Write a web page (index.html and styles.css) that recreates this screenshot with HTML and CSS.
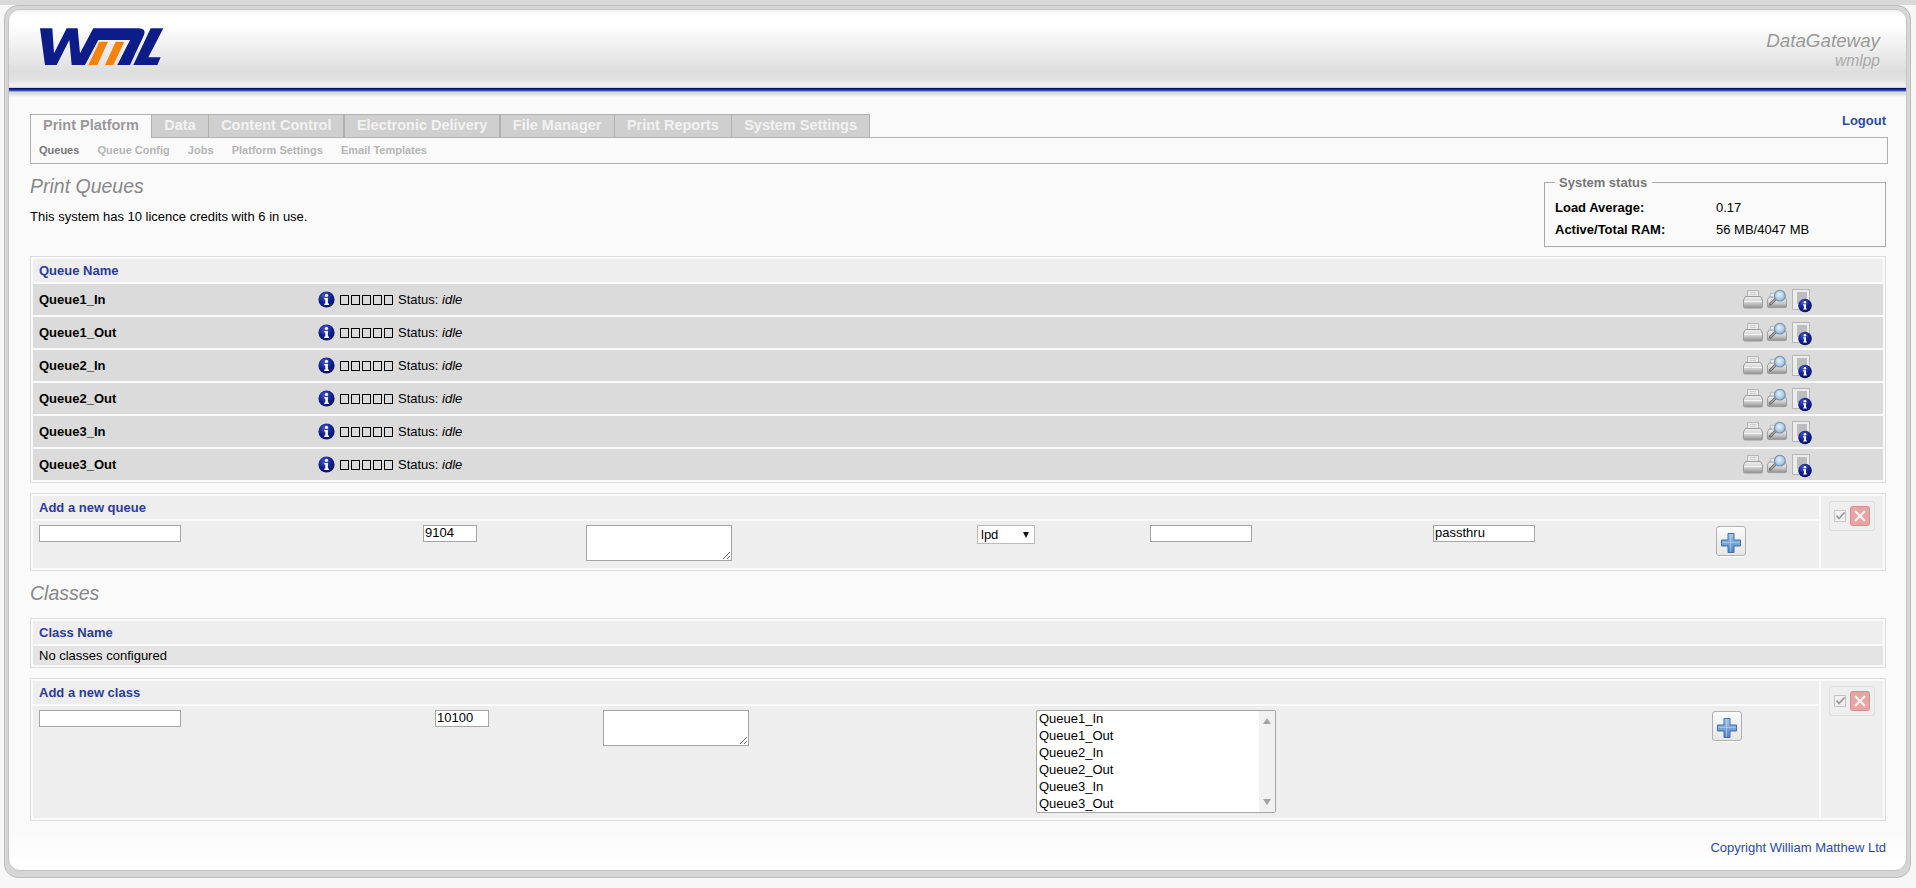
FILE: index.html
```html
<!DOCTYPE html>
<html lang="en">
<head>
<meta charset="utf-8">
<title>DataGateway - Print Queues</title>
<link rel="stylesheet" href="styles.css">
</head>
<body>
<svg class="defs" width="0" height="0" aria-hidden="true">
  <defs>
    <radialGradient id="gInfo" cx="40%" cy="30%" r="75%">
      <stop offset="0" stop-color="#4a5ad0"/><stop offset=".55" stop-color="#10208f"/><stop offset="1" stop-color="#060f60"/>
    </radialGradient>
    <linearGradient id="gPrint" x1="0" y1="0" x2="0" y2="1">
      <stop offset="0" stop-color="#f0f0f0"/><stop offset=".55" stop-color="#cdcdcd"/><stop offset="1" stop-color="#8f8f8f"/>
    </linearGradient>
    <linearGradient id="gPlus" x1="0" y1="0" x2="0" y2="1">
      <stop offset="0" stop-color="#a5c6ea"/><stop offset="1" stop-color="#4f84c4"/>
    </linearGradient>
    <radialGradient id="gLens" cx="45%" cy="40%" r="60%">
      <stop offset="0" stop-color="#e6f1fb"/><stop offset="1" stop-color="#8fbae4"/>
    </radialGradient>
    <symbol id="i-info" viewBox="0 0 16 16">
      <circle cx="8" cy="8" r="7.6" fill="url(#gInfo)"/>
      <circle cx="8" cy="4.2" r="1.5" fill="#fff"/>
      <path d="M5.9 6.600h3.400v5.200h1v1.400H5.900v-1.400h1v-3.800h-1z" fill="#fff"/>
    </symbol>
    <symbol id="i-printer" viewBox="0 0 20 20">
      <path d="M4.500 1.500h11v6h-11z" fill="#e9e9e9" stroke="#b5b5b5"/>
      <path d="M7 3.500h6M7 5.500h6" stroke="#cfcfcf"/>
      <path d="M2.500 7.500h15l2 3.500v6.500q0 1.500-1.500 1.500H2q-1.500 0-1.500-1.500V11z" fill="url(#gPrint)" stroke="#9b9b9b"/>
      <path d="M1 12.500h18" stroke="#f6f6f6"/>
    </symbol>
    <symbol id="i-preview" viewBox="0 0 21 20">
      <path d="M3.500 4h9v5h-9z" fill="#e9e9e9" stroke="#b5b5b5"/>
      <path d="M2 8h17l1.500 3v6.500q0 1.500-1.500 1.500H2q-1.500 0-1.500-1.500V11z" fill="url(#gPrint)" stroke="#9b9b9b"/>
      <path d="M9 10 3.500 15.500" stroke="#666" stroke-width="2.800" stroke-linecap="round"/>
      <path d="M9 10 3.500 15.500" stroke="#ddd" stroke-width="1"/>
      <circle cx="13.500" cy="6.500" r="5.600" fill="url(#gLens)" stroke="#7a94ad" stroke-width="1.300"/>
    </symbol>
    <symbol id="i-doc" viewBox="0 0 20 24">
      <path d="M.5.500h17v20H.5z" fill="#ececec" stroke="#b5b5b5"/>
      <path d="M5 3h10v12H5z" fill="#bdbdbd"/>
      <circle cx="13" cy="16.500" r="6.800" fill="url(#gInfo)"/>
      <circle cx="13" cy="13.300" r="1.300" fill="#fff"/>
      <path d="M11.200 15.300h2.800v4.200h.9v1.100h-3.700v-1.100h.8v-3.100h-.8z" fill="#fff"/>
    </symbol>
    <symbol id="i-plus" viewBox="0 0 20 20">
      <path d="M7 .5h6v6.500h6.500v6H13V19.500H7V13H.5V7H7z" fill="url(#gPlus)" stroke="#3f6ea8"/>
      <path d="M1.500 9.500h17M9.500 1.500v17" stroke="#c4daf2" stroke-opacity=".55"/>
    </symbol>
    <symbol id="i-check" viewBox="0 0 12 12">
      <path d="M.5.500h11v11H.5z" fill="#f1f1f1" stroke="#c4c4c4"/>
      <path d="M2.500 5.500 5 8.500 10.500 2.500" fill="none" stroke="#9a9a9a" stroke-width="1.800"/>
    </symbol>
    <symbol id="i-cross" viewBox="0 0 20 20">
      <rect x=".5" y=".5" width="19" height="19" rx="2" fill="#e8a3a3" stroke="#d98e8e"/>
      <path d="M5 5l10 10M15 5 5 15" stroke="#fbeeee" stroke-width="2.400"/>
    </symbol>
  </defs>
</svg>

<div class="frame">
  <div class="panel">
    <header class="masthead">
      <svg class="logo" viewBox="0 0 435 165" role="img" aria-label="WML">
        <path fill="#0c1d8a" d="M30 25H67L72 100 110 25H143L150 100 190 25H325Q350 25 342 45L300 135H262L300 60H205L165 135H125L118 60 80 135H45Z"/>
        <path fill="#0c1d8a" d="M362 25H400L355 112H392L382 135H310Z"/>
        <path fill="#f5820a" d="M175 135 208 65H234L202 135Z"/>
        <path fill="#f5820a" d="M225 135 257 65H283L250 135Z"/>
      </svg>
      <div class="product">
        <div class="product-name">DataGateway</div>
        <div class="product-host">wmlpp</div>
      </div>
    </header>
    <div class="rule"></div>

    <main class="content">
      <div class="tabbar">
        <nav class="tabs">
          <a class="tab tab-active">Print Platform</a>
          <a class="tab">Data</a>
          <a class="tab">Content Control</a>
          <a class="tab">Electronic Delivery</a>
          <a class="tab">File Manager</a>
          <a class="tab">Print Reports</a>
          <a class="tab">System Settings</a>
        </nav>
        <a class="logout">Logout</a>
      </div>
      <nav class="subtabs">
        <a class="subtab subtab-active">Queues</a>
        <a class="subtab">Queue Config</a>
        <a class="subtab">Jobs</a>
        <a class="subtab">Platform Settings</a>
        <a class="subtab">Email Templates</a>
      </nav>

      <section class="intro">
        <div>
          <h1 class="title">Print Queues</h1>
          <p class="licence">This system has 10 licence credits with 6 in use.</p>
        </div>
        <fieldset class="status">
          <legend>System status</legend>
          <div class="status-row"><b>Load Average:</b><span>0.17</span></div>
          <div class="status-row"><b>Active/Total RAM:</b><span>56 MB/4047 MB</span></div>
        </fieldset>
      </section>

      <section class="box">
        <div class="cell head">Queue Name</div>
        <div class="cell queue"><b>Queue1_In</b><div class="state"><svg class="ico-info"><use href="#i-info"/></svg><span class="leds"><i></i><i></i><i></i><i></i><i></i></span><span>Status: <em>idle</em></span></div><div class="tools"><svg class="ico-p"><use href="#i-printer"/></svg><svg class="ico-v"><use href="#i-preview"/></svg><svg class="ico-d"><use href="#i-doc"/></svg></div></div>
        <div class="cell queue"><b>Queue1_Out</b><div class="state"><svg class="ico-info"><use href="#i-info"/></svg><span class="leds"><i></i><i></i><i></i><i></i><i></i></span><span>Status: <em>idle</em></span></div><div class="tools"><svg class="ico-p"><use href="#i-printer"/></svg><svg class="ico-v"><use href="#i-preview"/></svg><svg class="ico-d"><use href="#i-doc"/></svg></div></div>
        <div class="cell queue"><b>Queue2_In</b><div class="state"><svg class="ico-info"><use href="#i-info"/></svg><span class="leds"><i></i><i></i><i></i><i></i><i></i></span><span>Status: <em>idle</em></span></div><div class="tools"><svg class="ico-p"><use href="#i-printer"/></svg><svg class="ico-v"><use href="#i-preview"/></svg><svg class="ico-d"><use href="#i-doc"/></svg></div></div>
        <div class="cell queue"><b>Queue2_Out</b><div class="state"><svg class="ico-info"><use href="#i-info"/></svg><span class="leds"><i></i><i></i><i></i><i></i><i></i></span><span>Status: <em>idle</em></span></div><div class="tools"><svg class="ico-p"><use href="#i-printer"/></svg><svg class="ico-v"><use href="#i-preview"/></svg><svg class="ico-d"><use href="#i-doc"/></svg></div></div>
        <div class="cell queue"><b>Queue3_In</b><div class="state"><svg class="ico-info"><use href="#i-info"/></svg><span class="leds"><i></i><i></i><i></i><i></i><i></i></span><span>Status: <em>idle</em></span></div><div class="tools"><svg class="ico-p"><use href="#i-printer"/></svg><svg class="ico-v"><use href="#i-preview"/></svg><svg class="ico-d"><use href="#i-doc"/></svg></div></div>
        <div class="cell queue"><b>Queue3_Out</b><div class="state"><svg class="ico-info"><use href="#i-info"/></svg><span class="leds"><i></i><i></i><i></i><i></i><i></i></span><span>Status: <em>idle</em></span></div><div class="tools"><svg class="ico-p"><use href="#i-printer"/></svg><svg class="ico-v"><use href="#i-preview"/></svg><svg class="ico-d"><use href="#i-doc"/></svg></div></div>
      </section>

      <section class="box box-add">
        <div class="add-main">
          <div class="cell head">Add a new queue</div>
          <form class="cell add-row add-queue">
            <input class="field f-name" type="text">
            <input class="field f-port" type="text" value="9104">
            <textarea class="field f-desc"></textarea>
            <span class="select-wrap"><select class="field f-proto"><option>lpd</option></select></span>
            <input class="field f-wide" type="text">
            <input class="field f-wide" type="text" value="passthru">
            <button class="add-btn" type="button" aria-label="Add"><svg class="ico-plus"><use href="#i-plus"/></svg></button>
          </form>
        </div>
        <div class="cell side"><div class="side-tools"><svg class="ico-check"><use href="#i-check"/></svg><svg class="ico-cross"><use href="#i-cross"/></svg></div></div>
      </section>

      <h2 class="title title-classes">Classes</h2>

      <section class="box">
        <div class="cell head">Class Name</div>
        <div class="cell empty">No classes configured</div>
      </section>

      <section class="box box-add">
        <div class="add-main">
          <div class="cell head">Add a new class</div>
          <form class="cell add-row add-class">
            <input class="field f-name" type="text">
            <input class="field f-port" type="text" value="10100">
            <textarea class="field f-desc"></textarea>
            <div class="listbox">
              <select class="list" multiple size="6">
                <option>Queue1_In</option><option>Queue1_Out</option><option>Queue2_In</option><option>Queue2_Out</option><option>Queue3_In</option><option>Queue3_Out</option>
              </select>
              <div class="list-scroll"><i class="arrow-up"></i><i class="arrow-down"></i></div>
            </div>
            <button class="add-btn" type="button" aria-label="Add"><svg class="ico-plus"><use href="#i-plus"/></svg></button>
          </form>
        </div>
        <div class="cell side"><div class="side-tools"><svg class="ico-check"><use href="#i-check"/></svg><svg class="ico-cross"><use href="#i-cross"/></svg></div></div>
      </section>

      <footer class="copyright">Copyright William Matthew Ltd</footer>
    </main>
  </div>
</div>
</body>
</html>
```

FILE: styles.css
```css
* { box-sizing: border-box; }
html, body { margin: 0; height: 100%; }
body {
  background: linear-gradient(#d9d9d9 0, #d9d9d9 5px, #f7f7f7 5px);
  font: 13px/1.2 "Liberation Sans", Arial, sans-serif;
  color: #000;
  overflow: hidden;
}
.defs { position: absolute; }

.frame {
  margin: 5px 5px 10px 4px;
  padding: 3px 3px 6px;
  height: 873px;
  border: 1px solid #bdbdbd;
  border-radius: 14px;
  background: #d6d6d6;
}
.panel {
  height: 100%;
  border: 1px solid #c4c4c4;
  border-radius: 12px;
  background: linear-gradient(#fafafa 0, #fafafa 820px, #fff 855px);
  overflow: hidden;
}

.masthead {
  height: 78px;
  display: flex;
  justify-content: space-between;
  background: linear-gradient(#f2f2f2 0, #fff 6px, #fff 15px, #dedede 62px, #e2e2e2 70px, #f4f4f4 76px, #c9c9c9 78px);
}
.logo { width: 145px; height: 55px; margin: 10px 0 0 21px; }
.product { margin: 20px 26px 0 0; text-align: right; font-style: italic; color: #999; }
.product-name { font-size: 18.800px; line-height: 21px; }
.product-host { font-size: 15.600px; line-height: 19px; color: #aaa; }
.rule {
  height: 9px;
  background: linear-gradient(#0a1560 0, #0a1560 1px, #2a46b0 2px, #3f5fcf 3px, #e6e6e6 4px, #d6d6d6 5px, #fafafa 9px);
}

.content { padding: 0 20px 0 21px; }

.tabbar { display: flex; justify-content: space-between; padding-top: 17px; }
.tabs { display: flex; }
.tab {
  height: 24px;
  margin-right: -0.6px;
  padding: 0 12px;
  border: 1px solid #b0b0b0;
  background: #cfcfcf;
  color: #f2f2f2;
  font-size: 14.500px;
  font-weight: bold;
  line-height: 21px;
  white-space: nowrap;
}
.tab-active { position: relative; z-index: 1; border-bottom: 0; background: #fafafa; color: #999; }
.logout { margin-top: -1px; color: #2a4ab0; font-weight: bold; line-height: 16px; }

.subtabs {
  display: flex;
  gap: 18.200px;
  height: 27px;
  margin: -1px -2px 0 0;
  padding: 0 8px;
  border: 1px solid #b0b0b0;
  font-size: 11px;
  font-weight: bold;
  line-height: 25px;
  color: #b5b5b5;
}
.subtab-active { color: #777; }

.intro { display: flex; justify-content: space-between; height: 92px; }
.title { margin: 0; color: #888; font-size: 19.500px; font-style: italic; font-weight: normal; line-height: 24px; }
.intro .title { margin-top: 10px; }
.licence { margin: 11px 0 0; }

.status {
  width: 342px;
  height: 72px;
  margin: 11px 0 0;
  padding: 7px 9px 0 10px;
  border: 1px solid #aaa;
}
.status legend { padding: 0 5px 0 4px; margin-left: 0; color: #777; font-weight: bold; line-height: 15px; }
.status-row { display: flex; height: 22px; line-height: 22px; }
.status-row b { width: 161px; }

.box { margin-bottom: 10px; padding: 2px; border: 1px solid #ddd; display: flex; flex-direction: column; gap: 2px; }
.box-add { flex-direction: row; }
.add-main { flex: 1; display: flex; flex-direction: column; gap: 2px; }
.cell { background: #eee; }
.head { height: 23px; padding-left: 6px; color: #2b3a9e; font-weight: bold; line-height: 23px; }
.queue { display: flex; align-items: center; height: 31px; padding-left: 6px; background: #dbdbdb; }
.queue b { width: 279px; }
.state { display: flex; align-items: center; }
.ico-info { width: 17px; height: 17px; }
.leds { display: flex; gap: 2px; margin: 0 5px 0 5px; }
.leds i { width: 9px; height: 10px; border: 1px solid #000; }
.tools { margin-left: auto; margin-right: 71px; display: flex; align-items: flex-start; height: 31px; padding-top: 5px; }
.tools svg { display: block; }
.ico-p { width: 20px; height: 20px; margin-right: 4px; }
.ico-v { width: 20px; height: 20px; margin-right: 5px; }
.ico-d { width: 20px; height: 24px; }
.empty { height: 19px; padding-left: 6px; background: #e4e4e4; line-height: 19px; }

.add-row { display: grid; align-items: start; justify-items: start; padding: 4px 0 0 6px; }
.add-queue { height: 47px; grid-template-columns: 384px 163px 391px 173px 283px 283px 1fr; }
.add-class { height: 112px; grid-template-columns: 396px 168px 433px 676px 1fr; }
.field {
  display: block;
  margin: 0;
  padding: 0 1px 2px;
  border: 1px solid #a5a5a5;
  border-radius: 0;
  background: #fff;
  font: 13px "Liberation Sans", Arial, sans-serif;
}
.f-name { width: 142px; height: 17px; }
.f-port { width: 54px; height: 17px; }
.f-desc { width: 146px; height: 36px; }
.f-wide { width: 102px; height: 17px; }
.f-proto { width: 58px; height: 19px; padding: 0 0 0 3px; appearance: none; border-color: #bbb; }
.select-wrap { position: relative; display: block; }
.select-wrap::after {
  content: "";
  position: absolute;
  top: 7px;
  right: 6px;
  border: 3.500px solid transparent;
  border-top: 6px solid #111;
  border-bottom: 0;
  pointer-events: none;
}
.add-btn {
  display: block;
  width: 30px;
  height: 30px;
  margin: 1px 0 0;
  padding: 4px 0 0;
  border: 1px solid #b0b0b0;
  border-radius: 3px;
  background: linear-gradient(#fbfbfb, #e6e6e6);
  box-shadow: 0 1px 0 #fff;
}
.ico-plus { display: block; width: 20px; height: 20px; margin: 0 auto; }
.side { width: 62px; padding: 5px 0 0 8px; }
.side-tools {
  display: flex;
  align-items: center;
  width: 46px;
  height: 30px;
  padding-left: 4px;
  border: 1px solid #ddd;
  border-radius: 3px;
}
.ico-check { width: 12px; height: 12px; margin: 0 4px 0 0; }
.ico-cross { width: 20px; height: 20px; }

.title-classes { padding: 0 0 13px; }

.listbox { position: relative; width: 240px; height: 103px; }
.list {
  display: block;
  width: 100%;
  height: 100%;
  margin: 0;
  padding: 0;
  border: 1px solid #a5a5a5;
  background: #fff;
  font: 13px/17px "Liberation Sans", Arial, sans-serif;
  overflow: hidden;
}
.list option { height: 17px; padding: 0 2px; line-height: 17px; min-height: 17px; }
.list-scroll {
  position: absolute;
  top: 1px;
  right: 1px;
  bottom: 1px;
  width: 16px;
  display: flex;
  flex-direction: column;
  justify-content: space-between;
  align-items: center;
  padding: 7px 0;
  background: #f1f1f1;
}
.arrow-up { border: 4px solid transparent; border-top: 0; border-bottom: 6px solid #a3a3a3; }
.arrow-down { border: 4px solid transparent; border-bottom: 0; border-top: 6px solid #a3a3a3; }

.copyright { margin-top: 19px; text-align: right; color: #2b4aa8; font-size: 13px; line-height: 16px; }
```
